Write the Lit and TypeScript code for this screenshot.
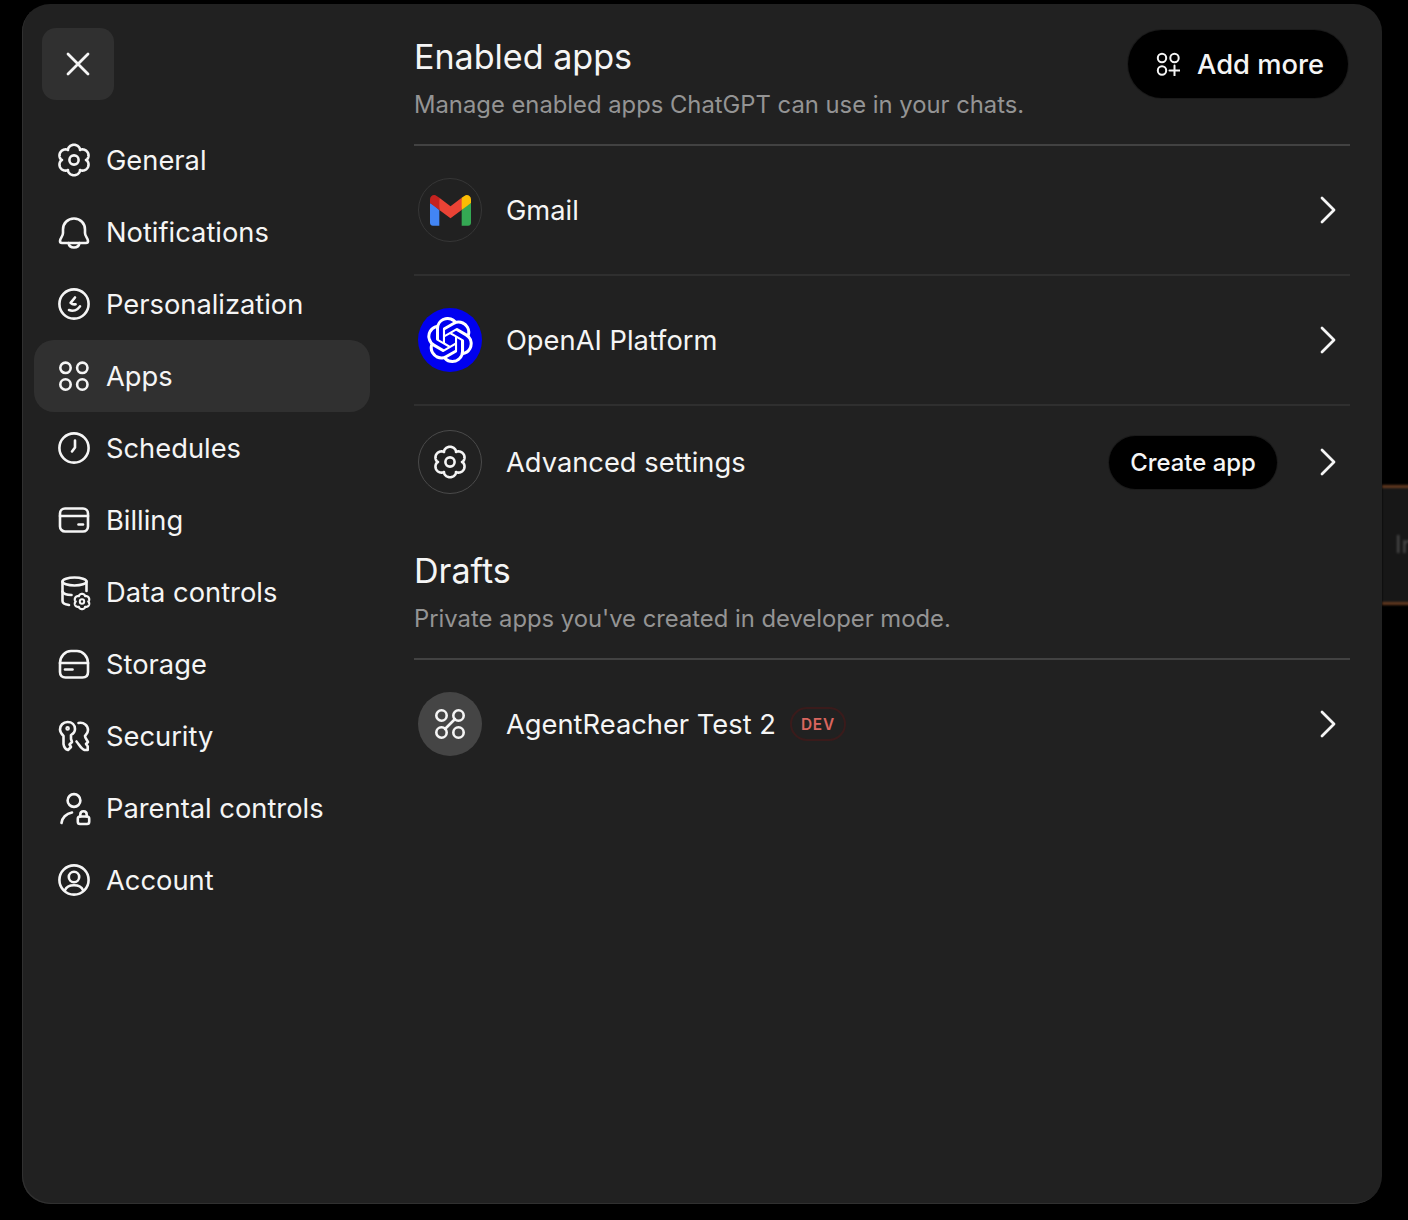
import { LitElement, css, html, svg } from 'lit';
import { customElement } from 'lit/decorators.js';

// six-lobed outline used by the settings icon
const gearPath = (cx: number, cy: number, rx: number, ry: number, depth: number) => {
  const pts: string[] = [];
  for (let i = 0; i < 180; i++) {
    const t = (i / 180) * Math.PI * 2;
    const k = 1 - depth + depth * Math.pow(Math.abs(Math.cos(3 * t)), 0.7);
    pts.push(`${(cx + rx * k * Math.sin(t)).toFixed(2)} ${(cy - ry * k * Math.cos(t)).toFixed(2)}`);
  }
  return `M${pts.join('L')}Z`;
};

const gear = svg`<path d=${gearPath(16, 16, 15.8, 15.2, 0.24)} /><circle cx="16" cy="16" r="4.6" />`;

const icons: Record<string, unknown> = {
  general: gear,
  bell: svg`<path d="M16 2.5C9.5 2.5 5 7.5 5 13.5V17C5 20.5 2 22 2 25C2 26.3 3 27 4 27H28C29 27 30 26.3 30 25C30 22 27 20.5 27 17V13.5C27 7.5 22.5 2.5 16 2.5Z" /><path d="M10.5 27C11 30 13.5 31.5 16 31.5C18.5 31.5 21 30 21.5 27" />`,
  smile: svg`<circle cx="16" cy="16" r="14.6" /><path d="M17 9.5L12.6 14.8C14 16.2 16 16.6 17.6 16.2" /><path d="M11 22C15 23.4 19.5 22.2 22 18.4" />`,
  apps: svg`<circle cx="7.5" cy="7.8" r="5.2" /><circle cx="24.3" cy="7.8" r="5.2" /><circle cx="7.5" cy="24.5" r="5.2" /><circle cx="24.3" cy="24.5" r="5.2" />`,
  clock: svg`<circle cx="16" cy="16" r="14.6" /><path d="M17 8.5V15.5L14 19.5" />`,
  card: svg`<rect x="2" y="4.5" width="28" height="23" rx="5" /><path d="M2 12H30" /><path d="M20.5 20.5H25" />`,
  data: svg`<ellipse cx="16.5" cy="5.5" rx="12" ry="4" /><path d="M4.5 5.5V25C4.5 27 7 28.5 11 29" /><path d="M4.5 15.5C5.5 18 9 19 13.5 19" /><path d="M28.5 5.5V15" /><path d=${gearPath(24, 25.5, 7.8, 7.6, 0.2)} stroke-width="2.2" /><circle cx="24" cy="25.5" r="2.2" stroke-width="2" />`,
  storage: svg`<path d="M2 15C2 8.5 7 3 13 3H19C25 3 30 8.5 30 15V24C30 27.5 28 29.5 24.5 29.5H7.5C4 29.5 2 27.5 2 24V15Z" /><path d="M2 15H30" /><path d="M7 21.5H14.5" />`,
  keys: svg`<path d="M9.5 2C5 2 2 5.5 2 9.5C2 12.5 4 14.5 5.5 16V24C6 27 8 29.5 10 30L13 27L11.5 24.5L14 22L13 19V15C15.5 13.5 17 12 17 9C17 5 14 2 9.5 2Z" /><circle cx="9.6" cy="8.4" r="1" /><path d="M20.5 3C26 2 30 5.5 30 10C30 13 28 14.5 27 16C27 18 29 20 30 22L28 24L29.7 26.2V30H26.5C23 29 21.5 25 18.5 21.5" />`,
  parent: svg`<circle cx="16" cy="8.5" r="6.4" /><path d="M3.5 31C4 26 8 21.5 14 20.5" /><rect x="19.8" y="24.5" width="11.4" height="7.5" rx="2.2" /><path d="M22.3 24.5V22.5C22.3 18.2 28.7 18.2 28.7 22.5V24.5" />`,
  account: svg`<circle cx="16" cy="16" r="14.6" /><circle cx="16" cy="13" r="5.2" /><path d="M6.8 26.5C8.5 22.5 12 21.3 16 21.3C20 21.3 23.5 22.5 25.2 26.5" />`,
};

const nav = [
  ['general', 'General'],
  ['bell', 'Notifications'],
  ['smile', 'Personalization'],
  ['apps', 'Apps'],
  ['clock', 'Schedules'],
  ['card', 'Billing'],
  ['data', 'Data controls'],
  ['storage', 'Storage'],
  ['keys', 'Security'],
  ['parent', 'Parental controls'],
  ['account', 'Account'],
];

const chevron = html`<svg class="chevron" viewBox="0 0 16 28"><path d="M2 2L14 14L2 26" /></svg>`;

const gmail = html`<svg class="gmail" viewBox="0 0 256 193">
  <path fill="#4285F4" d="M58.182 192.05V93.14L27.507 65.077 0 49.504v125.091c0 9.658 7.825 17.455 17.455 17.455h40.727Z" />
  <path fill="#34A853" d="M197.818 192.05h40.727c9.659 0 17.455-7.826 17.455-17.455V49.505l-31.156 17.837-27.026 25.798v98.91Z" />
  <path fill="#EA4335" d="m58.182 93.14-4.174-38.647 4.174-36.989L128 69.868l69.818-52.364 4.669 34.992-4.669 40.644L128 145.504z" />
  <path fill="#FBBC04" d="M197.818 17.504V93.14L256 49.504V26.231c0-21.585-24.64-33.89-41.89-20.945l-16.292 12.218Z" />
  <path fill="#C5221F" d="m0 49.504 26.759 20.07L58.182 93.14V17.504L41.89 5.286C24.61-7.66 0 4.646 0 26.23v23.273Z" />
</svg>`;

const openai = html`<svg class="blossom" viewBox="0 0 24 24"><path fill="#fff" d="M22.2819 9.8211a5.9847 5.9847 0 0 0-.5157-4.9108 6.0462 6.0462 0 0 0-6.5098-2.9A6.0651 6.0651 0 0 0 4.9807 4.1818a5.9847 5.9847 0 0 0-3.9977 2.9 6.0462 6.0462 0 0 0 .7427 7.0966 5.98 5.98 0 0 0 .511 4.9107 6.051 6.051 0 0 0 6.5146 2.9001A5.9847 5.9847 0 0 0 13.2599 24a6.0557 6.0557 0 0 0 5.7718-4.2058 5.9894 5.9894 0 0 0 3.9977-2.9001 6.0557 6.0557 0 0 0-.7475-7.0729zm-9.022 12.6081a4.4755 4.4755 0 0 1-2.8764-1.0408l.1419-.0804 4.7783-2.7582a.7948.7948 0 0 0 .3927-.6813v-6.7369l2.02 1.1686a.071.071 0 0 1 .038.052v5.5826a4.504 4.504 0 0 1-4.4945 4.4944zm-9.6607-4.1254a4.4708 4.4708 0 0 1-.5346-3.0137l.142.0852 4.783 2.7582a.7712.7712 0 0 0 .7806 0l5.8428-3.3685v2.3324a.0804.0804 0 0 1-.0332.0615L9.74 19.9502a4.4992 4.4992 0 0 1-6.1408-1.6464zM2.3408 7.8956a4.485 4.485 0 0 1 2.3655-1.9728V11.6a.7664.7664 0 0 0 .3879.6765l5.8144 3.3543-2.0201 1.1685a.0757.0757 0 0 1-.071 0l-4.8303-2.7865A4.504 4.504 0 0 1 2.3408 7.872zm16.5963 3.8558L13.1038 8.364 15.1192 7.2a.0757.0757 0 0 1 .071 0l4.8303 2.7913a4.4944 4.4944 0 0 1-.6765 8.1042v-5.6772a.79.79 0 0 0-.407-.667zm2.0107-3.0231l-.142-.0852-4.7735-2.7818a.7759.7759 0 0 0-.7854 0L9.409 9.2297V6.8974a.0662.0662 0 0 1 .0284-.0615l4.8303-2.7866a4.4992 4.4992 0 0 1 6.6802 4.66zM8.3065 12.863l-2.02-1.1638a.0804.0804 0 0 1-.038-.0567V6.0742a4.4992 4.4992 0 0 1 7.3757-3.4537l-.142.0805L8.704 5.459a.7948.7948 0 0 0-.3927.6813zm1.0976-2.3654l2.602-1.4998 2.6069 1.4998v2.9994l-2.5974 1.4997-2.6067-1.4997Z" /></svg>`;

@customElement('app-root')
export class AppRoot extends LitElement {
  static styles = css`
    :host {
      display: block;
      position: relative;
      width: 1408px;
      height: 1220px;
      box-sizing: border-box;
      padding: 4px 26px 16px 22px;
      background: #000;
      overflow: hidden;
      font-family: Inter, 'Liberation Sans', sans-serif;
      color: #f5f5f5;
    }
    .behind {
      position: absolute;
      left: 1382px;
      top: 485px;
      width: 40px;
      height: 120px;
      box-sizing: border-box;
      background: #171717;
      border-top: 3px solid #63391f;
      border-bottom: 3px solid #63391f;
      padding: 44px 0 0 13px;
      font-size: 24px;
      line-height: 26px;
      color: #4a4a4a;
      filter: blur(0.8px);
    }
    .panel {
      position: relative;
      display: flex;
      height: 100%;
      background: #212121;
      border-radius: 28px;
      box-shadow: inset 1px -1px 0 #303030;
    }
    .side {
      width: 392px;
      flex: none;
      box-sizing: border-box;
      padding: 24px 0 0 12px;
    }
    .close {
      width: 72px;
      height: 72px;
      margin-left: 8px;
      margin-bottom: 24px;
      border-radius: 14px;
      background: #303030;
      display: flex;
      align-items: center;
      justify-content: center;
    }
    .close svg {
      width: 24px;
      height: 24px;
      fill: none;
      stroke: #f5f5f5;
      stroke-width: 2.8;
      stroke-linecap: round;
    }
    .item {
      display: flex;
      align-items: center;
      gap: 16px;
      width: 336px;
      height: 72px;
      box-sizing: border-box;
      padding-left: 24px;
      border-radius: 20px;
      font-size: 27.3px;
      line-height: 36px;
    }
    .item span {
      margin-top: 2px;
    }
    .item.active {
      background: #303030;
    }
    .icon {
      width: 32px;
      height: 32px;
      flex: none;
      overflow: visible;
      fill: none;
      stroke: #f5f5f5;
      stroke-width: 2.6;
      stroke-linecap: round;
      stroke-linejoin: round;
    }
    .main {
      width: 936px;
      padding-top: 30px;
    }
    .head {
      display: flex;
      justify-content: space-between;
      align-items: flex-start;
      height: 112px;
      box-sizing: border-box;
      border-bottom: 2px solid #424242;
    }
    h2 {
      margin: 0;
      font-size: 34.1px;
      line-height: 46px;
      font-weight: 400;
    }
    p {
      margin: 7px 0 0;
      font-size: 23.8px;
      line-height: 36px;
      color: #949494;
    }
    .add {
      display: flex;
      align-items: center;
      gap: 17px;
      height: 68px;
      width: 220px;
      box-sizing: border-box;
      margin: -4px 2px 0 0;
      padding-left: 28px;
      border-radius: 34px;
      background: #000;
      box-shadow: 0 0 0 1px #1a1a1a;
      font-size: 27.3px;
      font-weight: 500;
    }
    .add svg {
      width: 24px;
      height: 24px;
      fill: none;
      stroke: #f5f5f5;
      stroke-width: 2;
      stroke-linecap: round;
    }
    .row {
      display: flex;
      align-items: center;
      height: 130px;
      box-sizing: border-box;
      padding: 0 14px 0 4px;
      border-bottom: 2px solid #2f2f2f;
      font-size: 27.3px;
    }
    .row.plain {
      height: 112px;
      border-bottom: none;
    }
    .row.draft {
      height: 128px;
      border-bottom: none;
    }
    .drafts {
      margin-top: 30px;
    }
    .logo {
      width: 64px;
      height: 64px;
      flex: none;
      box-sizing: border-box;
      margin-right: 24px;
      border-radius: 50%;
      display: flex;
      align-items: center;
      justify-content: center;
    }
    .logo.ring {
      border: 1.5px solid #363636;
    }
    .logo.ring-light {
      border: 1.5px solid #4a4a4a;
    }
    .logo.blue {
      background: #0000f0;
    }
    .logo.grey {
      background: #454545;
    }
    .gmail {
      width: 41px;
      height: 31px;
    }
    .blossom {
      width: 46px;
      height: 46px;
    }
    .name {
      flex: 1;
      display: flex;
      align-items: center;
    }
    .dev {
      margin-left: 14px;
      height: 34px;
      width: 56px;
      box-sizing: border-box;
      border: 2px solid #3a1b1b;
      border-radius: 17px;
      display: flex;
      align-items: center;
      justify-content: center;
      font-size: 15.4px;
      font-weight: 600;
      letter-spacing: 0.8px;
      color: #d9665f;
    }
    .create {
      display: flex;
      align-items: center;
      justify-content: center;
      width: 168px;
      height: 53px;
      margin-right: 43px;
      border-radius: 27px;
      background: #000;
      box-shadow: 0 0 0 1px #1a1a1a;
      font-size: 23.9px;
      font-weight: 500;
    }
    .chevron {
      width: 16px;
      height: 28px;
      flex: none;
      fill: none;
      stroke: #f5f5f5;
      stroke-width: 2.8;
      stroke-linecap: round;
      stroke-linejoin: round;
    }
  `;

  render() {
    return html`
      <div class="behind">In</div>
      <div class="panel">
        <div class="side">
          <div class="close">
            <svg viewBox="0 0 24 24"><path d="M2 2L22 22M22 2L2 22" /></svg>
          </div>
          ${nav.map(
            ([icon, label]) => html`
              <div class="item ${label === 'Apps' ? 'active' : ''}">
                <svg class="icon" viewBox="0 0 32 32">${icons[icon]}</svg>
                <span>${label}</span>
              </div>
            `
          )}
        </div>
        <div class="main">
          <div class="head">
            <div>
              <h2>Enabled apps</h2>
              <p>Manage enabled apps ChatGPT can use in your chats.</p>
            </div>
            <div class="add">
              <svg viewBox="0 0 24 24">
                <circle cx="6" cy="6" r="4.2" />
                <circle cx="18.5" cy="6" r="4.2" />
                <circle cx="6" cy="18.5" r="4.2" />
                <path d="M18.5 13.5V23.5M13.5 18.5H23.5" />
              </svg>
              <span>Add more</span>
            </div>
          </div>
          <div class="row">
            <div class="logo ring">${gmail}</div>
            <div class="name">Gmail</div>
            ${chevron}
          </div>
          <div class="row">
            <div class="logo blue">${openai}</div>
            <div class="name">OpenAI Platform</div>
            ${chevron}
          </div>
          <div class="row plain">
            <div class="logo ring-light">
              <svg class="icon" viewBox="0 0 32 32">${gear}</svg>
            </div>
            <div class="name">Advanced settings</div>
            <div class="create">Create app</div>
            ${chevron}
          </div>
          <div class="head drafts">
            <div>
              <h2>Drafts</h2>
              <p>Private apps you've created in developer mode.</p>
            </div>
          </div>
          <div class="row draft">
            <div class="logo grey">
              <svg class="icon" viewBox="0 0 32 32">
                <circle cx="7.5" cy="7.5" r="5.2" />
                <circle cx="24.5" cy="7.5" r="5.2" />
                <circle cx="7.5" cy="24.5" r="5.2" />
                <circle cx="24.5" cy="24.5" r="5.2" />
                <path d="M21 11L11 21" />
              </svg>
            </div>
            <div class="name">AgentReacher Test 2<span class="dev">DEV</span></div>
            ${chevron}
          </div>
        </div>
      </div>
    `;
  }
}
